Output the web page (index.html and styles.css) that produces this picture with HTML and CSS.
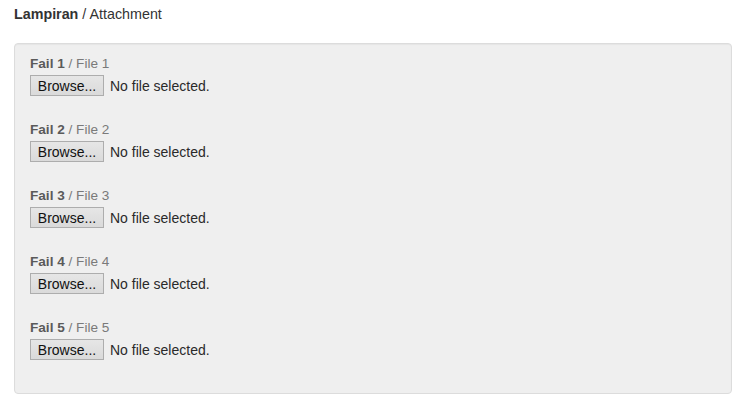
FILE: index.html
```html
<!DOCTYPE html>
<html>
<head>
<meta charset="utf-8">
<link rel="stylesheet" href="styles.css">
</head>
<body>
<div class="page">
  <h2 class="title"><b>Lampiran</b> / Attachment</h2>
  <div class="well">
    <div class="field">
      <div class="label"><b>Fail 1</b> / File 1</div>
      <div class="file"><span class="btn">Browse...</span><span class="status">No file selected.</span></div>
    </div>
    <div class="field">
      <div class="label"><b>Fail 2</b> / File 2</div>
      <div class="file"><span class="btn">Browse...</span><span class="status">No file selected.</span></div>
    </div>
    <div class="field">
      <div class="label"><b>Fail 3</b> / File 3</div>
      <div class="file"><span class="btn">Browse...</span><span class="status">No file selected.</span></div>
    </div>
    <div class="field">
      <div class="label"><b>Fail 4</b> / File 4</div>
      <div class="file"><span class="btn">Browse...</span><span class="status">No file selected.</span></div>
    </div>
    <div class="field">
      <div class="label"><b>Fail 5</b> / File 5</div>
      <div class="file"><span class="btn">Browse...</span><span class="status">No file selected.</span></div>
    </div>
  </div>
</div>
</body>
</html>
```
FILE: styles.css
```css
html, body { margin: 0; padding: 0; background: #fff; }
body { font-family: "Liberation Sans", Arial, sans-serif; color: #333; }
.page { padding: 4px 18px 0 14px; }
.title { margin: 0; font-size: 14.3px; font-weight: normal; line-height: 20px; color: #333; }
.title b { font-weight: bold; }
.well {
  margin-top: 19px;
  background: #efefef;
  border: 1px solid #dcdcdc;
  border-radius: 4px;
  box-shadow: inset 0 1px 1px rgba(0,0,0,0.04);
  padding: 11px 15px 33px 15px;
  height: 305px;
  display: flex;
  flex-direction: column;
  gap: 25px;
}
.field { display: flex; flex-direction: column; gap: 2px; }
.label { font-size: 13.6px; line-height: 18px; color: #7a7a7a; }
.label b { color: #5a5a5a; }
.file { display: flex; align-items: center; height: 21px; }
.btn {
  box-sizing: border-box;
  height: 21px;
  width: 74px;
  display: flex; align-items: center; justify-content: center;
  font-size: 14px; color: #111;
  background: linear-gradient(#e6e6e6, #dadada);
  border: 1px solid #adadad;
}
.status { margin-left: 6px; font-size: 14px; color: #2a2a2a; }
```
